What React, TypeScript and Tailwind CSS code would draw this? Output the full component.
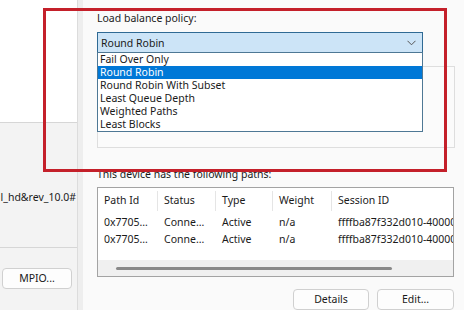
import React from "react"

const options = [
  "Fail Over Only",
  "Round Robin",
  "Round Robin With Subset",
  "Least Queue Depth",
  "Weighted Paths",
  "Least Blocks",
]

const rows = [
  { id: "0x7705…", status: "Conne…", type: "Active", weight: "n/a", session: "ffffba87f332d010-4000000" },
  { id: "0x7705…", status: "Conne…", type: "Active", weight: "n/a", session: "ffffba87f332d010-4000000" },
]

const cols = ["w-[60px]", "w-[58px]", "w-[57px]", "w-[59px]", "flex-1"]

export default function App() {
  return (
    <div
      className="relative flex w-[464px] h-[310px] overflow-hidden bg-[#f9f9f9] text-[10.5px] text-[#1a1a1a]"
      style={{ fontFamily: '"Noto Sans", "Segoe UI", sans-serif' }}
    >
      {/* left panel */}
      <div className="flex w-[78px] shrink-0 flex-col border-r border-[#dcdcdc] bg-[#f3f3f3]">
        <div className="h-[123px] shrink-0 border-b border-[#d6d6d6] bg-white" />
        <div className="mt-[65px] flex h-[18px] justify-end overflow-hidden whitespace-nowrap leading-[18px]">
          <span className="shrink-0 pr-[1px]">l_hd&amp;rev_10.0#</span>
        </div>
        <div className="mt-[41px] border-b border-[#d6d6d6]" />
        <button className="mt-[20px] ml-[2px] h-[21px] w-[70px] rounded-[4px] border border-[#d0d0d0] bg-[#fdfdfd] leading-[19px]">
          MPIO...
        </button>
      </div>

      {/* right panel */}
      <div className="flex flex-1 bg-[#fafafa]">
        <div className="w-[5px] shrink-0 bg-[#eeeeee]" />
        <div className="flex flex-1 flex-col pl-[14px] pr-[9px]">
          <div className="mt-[10px] h-[16px] leading-[16px]">Load balance policy:</div>
          <div className="relative mt-[6px] w-[326px]">
            <div className="flex h-[21px] items-center justify-between border border-[#2f6a94] bg-[#cce4f7] pl-[3px] pr-[6px]">
              <span className="leading-[16px]">Round Robin</span>
              <svg width="9" height="6" viewBox="0 0 9 6" fill="none">
                <path d="M0.5 0.8 L4.5 4.8 L8.5 0.8" stroke="#555" strokeWidth="1" />
              </svg>
            </div>
            <div className="absolute left-0 top-[20px] z-10 w-[326px] border border-[#4e7895] bg-white">
              {options.map((o) => (
                <div
                  key={o}
                  className={`h-[13px] pl-[2px] leading-[13px] ${
                    o === "Round Robin" ? "bg-[#0078d7] text-white" : ""
                  }`}
                >
                  {o}
                </div>
              ))}
            </div>
          </div>
          <div className="mt-[13px] h-[82px] w-[358px] border border-[#dedede] bg-[#fbfbfb]" />
          <div className="mt-[18px] h-[16px] leading-[16px]">This device has the following paths:</div>
          <div className="mt-[5px] flex h-[90px] w-[357px] flex-col border border-[#a3a3a3] bg-white">
            <div className="flex h-[26px] shrink-0">
              {["Path Id", "Status", "Type", "Weight", "Session ID"].map((h, i) => (
                <div
                  key={h}
                  className={`${cols[i]} my-[3px] flex items-center whitespace-nowrap px-[6px] ${
                    i < 4 ? "border-r border-[#e5e5e5]" : ""
                  }`}
                >
                  {h}
                </div>
              ))}
            </div>
            <div className="flex flex-col">
              {rows.map((r, k) => (
                <div key={k} className="flex h-[17px] leading-[17px]">
                  {[r.id, r.status, r.type, r.weight, r.session].map((c, i) => (
                    <div key={i} className={`${cols[i]} overflow-hidden whitespace-nowrap px-[6px]`}>
                      {c}
                    </div>
                  ))}
                </div>
              ))}
            </div>
            <div className="mt-auto flex h-[16px] items-center bg-[#f0f0f0]">
              <div className="ml-[18px] h-[3px] w-[276px] rounded-full bg-[#8a8a8a]" />
            </div>
          </div>
          <div className="mt-[12px] flex justify-end gap-[8px] pr-[1px]">
            <button className="h-[21px] w-[76px] rounded-[4px] border border-[#d0d0d0] bg-[#fdfdfd] leading-[19px]">
              Details
            </button>
            <button className="h-[21px] w-[77px] rounded-[4px] border border-[#d0d0d0] bg-[#fdfdfd] leading-[19px]">
              Edit...
            </button>
          </div>
        </div>
      </div>

      {/* red annotation */}
      <div className="pointer-events-none absolute left-[43px] top-[8px] h-[164px] w-[404px] border-[3px] border-[#c4202a]" />
    </div>
  )
}
